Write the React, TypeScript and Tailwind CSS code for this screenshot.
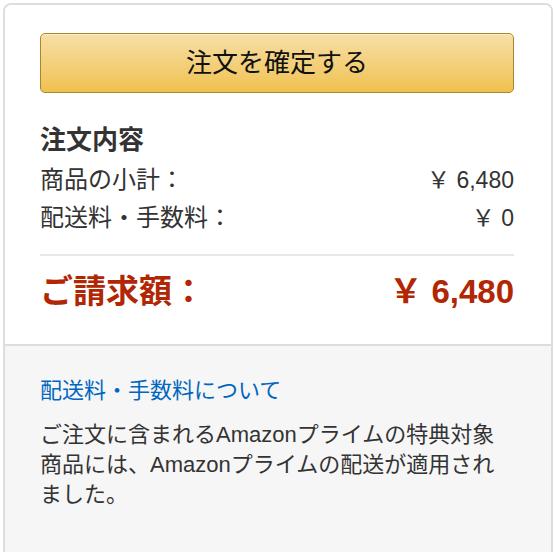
import React from "react";

const FONT = { fontFamily: '"Liberation Sans", "Noto Sans CJK JP", sans-serif' };

export default function App() {
  return (
    <div className="w-[554px] h-[552px] overflow-hidden bg-white" style={FONT}>
      <div className="ml-[3px] mt-[3px] w-[550px] h-[600px] border-2 border-[#dddddd] rounded-[8px] overflow-hidden flex flex-col">
        <div className="bg-white pl-[35px] pr-[37px] pt-[28px] pb-[32px] flex flex-col">
          <button className="h-[60px] w-full rounded-[5px] border border-[#a88734] bg-gradient-to-b from-[#f7dfa5] to-[#f0c14b] text-[26px] text-[#111111] leading-none flex items-center justify-center shadow-[inset_0_1px_0_rgba(255,255,255,0.4)]">
            注文を確定する
          </button>
          <div className="mt-[30px] text-[26px] leading-[34px] font-bold text-[#333333]">注文内容</div>
          <div className="mt-[4px] flex justify-between leading-[38px] text-[#333333]">
            <span className="text-[24px]">商品の小計：</span>
            <span className="text-[23px]">￥ 6,480</span>
          </div>
          <div className="flex justify-between leading-[38px] text-[#333333]">
            <span className="text-[24px]">配送料・手数料：</span>
            <span className="text-[23px]">￥ 0</span>
          </div>
          <div className="mt-[17px] h-[2px] bg-[#e7e7e7]" />
          <div className="mt-[16px] flex justify-between text-[33px] leading-[40px] font-bold text-[#b12704]">
            <span>ご請求額：</span>
            <span>￥ 6,480</span>
          </div>
        </div>
        <div className="h-[2px] bg-[#dddddd]" />
        <div className="flex-1 bg-[#f6f6f6] pl-[35px] pr-[37px] pt-[30px]">
          <div className="text-[22px] leading-[30px] text-[#0066c0]">配送料・手数料について</div>
          <p className="mt-[14px] text-[22px] leading-[30px] text-[#333333]">
            ご注文に含まれるAmazonプライムの特典対象商品には、Amazonプライムの配送が適用されました。
          </p>
        </div>
      </div>
    </div>
  );
}
